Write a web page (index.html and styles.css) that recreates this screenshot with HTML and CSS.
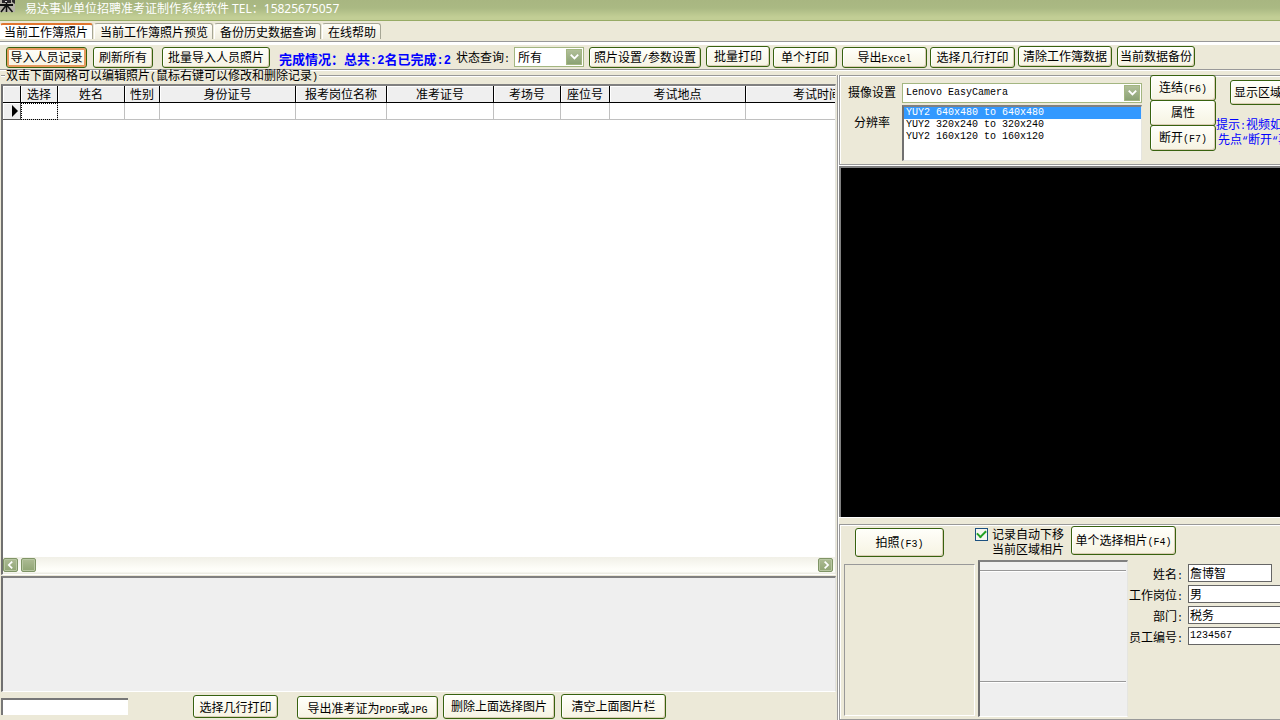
FILE: index.html
```html
<!DOCTYPE html>
<html lang="zh-CN">
<head>
<meta charset="utf-8">
<title>易达事业单位招聘准考证制作系统软件</title>
<link rel="stylesheet" href="styles.css">
</head>
<body>
<header class="titlebar">
  <svg class="app-icon" width="16" height="14" viewBox="0 0 16 14" aria-hidden="true">
    <path d="M0 0h15v12H0z" fill="#b5b2a8"/>
    <path d="M2 0h9v3H2zM12 0h3v4l-3-2z" fill="#2a262a"/>
    <path d="M5 1h2v1H5z" fill="#ddd"/>
    <path d="M0 5h13" stroke="#111" stroke-width="2"/>
    <path d="M6.500 3v9M6 5.500L1 12M7 5.500l5.500 6.500" stroke="#111" stroke-width="1.500" fill="none"/>
  </svg>
  <h1>易达事业单位招聘准考证制作系统软件 TEL<span class="wide-colon">：</span>15825675057</h1>
</header>

<nav class="tabs" role="tablist">
  <button class="tab active" role="tab" aria-selected="true">当前工作簿照片</button>
  <button class="tab" role="tab">当前工作簿照片预览</button>
  <button class="tab" role="tab">备份历史数据查询</button>
  <button class="tab" role="tab">在线帮助</button>
</nav>

<div class="toolbar">
  <button class="btn hot w81">导入人员记录</button>
  <button class="btn w60 gap-m">刷新所有</button>
  <button class="btn w108 gap-l">批量导入人员照片</button>
  <p class="progress gap-l">完成情况：总共<b class="n">:2</b>名已完成<b class="n">:2</b></p>
  <label class="gap-l" for="state">状态查询<span class="n">:</span></label>
  <span class="combo w70 gap-s"><select id="state"><option>所有</option></select><svg width="15" height="15" viewBox="0 0 15 15" aria-hidden="true"><path d="M4 5l4 4 4-4" fill="none" stroke="#fff" stroke-width="2"/></svg></span>
  <button class="btn w112 gap-s">照片设置<span class="n">/</span>参数设置</button>
  <button class="btn w64 gap-s up">批量打印</button>
  <button class="btn w64 gap-xs">单个打印</button>
  <button class="btn w85 gap-s">导出<span class="n">Excel</span></button>
  <button class="btn w85 gap-xs">选择几行打印</button>
  <button class="btn w94 gap-xs up">清除工作簿数据</button>
  <button class="btn w78 gap-s up">当前数据备份</button>
</div>

<main class="main">
  <section class="left">
    <h2 class="caption"><span>双击下面网格可以编辑照片<span class="n">(</span>鼠标右键可以修改和删除记录<span class="n">)</span></span></h2>
    <div class="grid-box">
      <div class="grid-view">
        <table class="grid">
          <colgroup><col class="c18"><col class="c37"><col class="c67"><col class="c35"><col class="c136"><col class="c91"><col class="c107"><col class="c67"><col class="c49"><col class="c136"><col class="c142"></colgroup>
          <thead><tr><th></th><th>选择</th><th>姓名</th><th>性别</th><th>身份证号</th><th>报考岗位名称</th><th>准考证号</th><th>考场号</th><th>座位号</th><th>考试地点</th><th>考试时间</th></tr></thead>
          <tbody><tr><th><svg width="6" height="12" viewBox="0 0 6 12" aria-hidden="true"><path d="M0 0l6 6-6 6z"/></svg></th><td class="focus"></td><td></td><td></td><td></td><td></td><td></td><td></td><td></td><td></td><td></td></tr></tbody>
        </table>
      </div>
      <div class="hscroll">
        <button aria-label="向左滚动"><svg width="14" height="14" viewBox="0 0 14 14"><path d="M9 3L5 7l4 4" fill="none" stroke="#fff" stroke-width="2"/></svg></button>
        <span class="thumb"></span>
        <button class="end" aria-label="向右滚动"><svg width="14" height="14" viewBox="0 0 14 14"><path d="M6 3l4 4-4 4" fill="none" stroke="#fff" stroke-width="2"/></svg></button>
      </div>
    </div>
    <div class="photo-strip"></div>
    <div class="footer">
      <input class="path" type="text" aria-label="行号">
      <button class="btn w85 rows">选择几行打印</button>
      <button class="btn w141 pdf">导出准考证为<span class="n">PDF</span>或<span class="n">JPG</span></button>
      <button class="btn w112 tall gap-s">删除上面选择图片</button>
      <button class="btn w105 tall gap-m">清空上面图片栏</button>
    </div>
  </section>

  <section class="right">
    <div class="group camera">
      <div class="camera-labels"><label for="cam">摄像设置</label><label for="res">分辨率</label></div>
      <div class="camera-fields">
        <span class="combo"><select id="cam" class="mono"><option>Lenovo EasyCamera</option></select><svg width="15" height="15" viewBox="0 0 15 15" aria-hidden="true"><path d="M4 5l4 4 4-4" fill="none" stroke="#fff" stroke-width="2"/></svg></span>
        <select id="res" class="list mono" size="4"><option selected>YUY2 640x480 to 640x480</option><option>YUY2 320x240 to 320x240</option><option>YUY2 160x120 to 160x120</option></select>
      </div>
      <div class="camera-buttons">
        <button class="btn">连结<span class="n">(F6)</span></button>
        <button class="btn">属性</button>
        <button class="btn">断开<span class="n">(F7)</span></button>
      </div>
      <div class="camera-more">
        <button class="btn">显示区域</button>
        <p>提示<span class="n">:</span>视频如</p>
        <p class="second">先点<span class="n">“</span>断开<span class="n">“</span>再</p>
      </div>
    </div>
    <div class="video"></div>
    <div class="group capture">
      <div class="capture-bar">
        <button class="btn shoot">拍照<span class="n">(F3)</span></button>
        <div class="auto"><input id="auto" type="checkbox" checked><label for="auto">记录自动下移</label><span>当前区域相片</span></div>
        <button class="btn pick">单个选择相片<span class="n">(F4)</span></button>
      </div>
      <div class="capture-body">
        <div class="frame"></div>
        <div class="sheet"><div></div></div>
        <form class="person">
          <label for="name">姓名<span class="n">:</span></label><input id="name" class="short" value="詹博智">
          <label for="post">工作岗位<span class="n">:</span></label><input id="post" value="男">
          <label for="dept">部门<span class="n">:</span></label><input id="dept" value="税务">
          <label for="no">员工编号<span class="n">:</span></label><input id="no" class="mono" value="1234567">
        </form>
      </div>
    </div>
  </section>
</main>
</body>
</html>
```
FILE: styles.css
```css
* { box-sizing: border-box; }
body {
  margin: 0;
  display: flex;
  flex-direction: column;
  height: 100vh;
  overflow: hidden;
  background: #ece9d8;
  color: #000;
  font: 12px/14px "Noto Sans CJK SC", sans-serif;
  white-space: nowrap;
}
button, input, select { font: inherit; color: inherit; margin: 0; }
h1, h2, p { margin: 0; font: inherit; }
.n, .mono { font-family: "Liberation Mono", monospace; font-size: 10px; }
.n { line-height: 10px; }

/* title bar */
.titlebar {
  flex: none;
  display: flex;
  height: 21px;
  background: linear-gradient(#a8b681, #aab983 40%, #c2ce95 85%, #c2ce95);
  border-bottom: 1px solid #97ab65;
  color: #fff;
}
.app-icon { flex: none; width: 16px; height: 14px; margin-right: 9px; }
.titlebar h1 { font-family: "Noto Sans", "Noto Sans CJK SC", sans-serif; line-height: 15px; }
.wide-colon { font-family: "Noto Sans CJK TC", sans-serif; }

/* tabs */
.tabs {
  flex: none;
  display: flex;
  align-items: flex-end;
  gap: 1px;
  height: 21px;
  padding-bottom: 2px;
  border-bottom: 1px solid #999;
}
.tab {
  height: 16px;
  padding: 0 4px 0 5px;
  border: 1px solid #a6a695;
  border-bottom: 0;
  border-left-color: #fff;
  border-radius: 3px 3px 0 0;
  background: linear-gradient(#fdfdf6, #f0eddf);
  line-height: 14px;
}
.tab.active { padding: 0 4px 0 3px; border-top: 2px solid #e0762f; background: #fff; line-height: 12px; }

/* push buttons */
.btn {
  flex: none;
  height: 21px;
  padding: 0 0 2px;
  border: 1px solid #38620f;
  border-radius: 3px;
  background: linear-gradient(#fffffa, #f6f3e2);
  box-shadow: inset -1px -1px #dacdb5, inset 1px 1px #fff;
  line-height: 16px;
}
.btn.hot { box-shadow: inset 0 0 0 2px #e79a5e; }
.w60 { width: 60px; } .w64 { width: 64px; } .w70 { width: 70px; }
.w78 { width: 78px; } .w81 { width: 81px; } .w85 { width: 85px; }
.w94 { width: 94px; } .w105 { width: 105px; } .w108 { width: 108px; }
.w112 { width: 112px; } .w141 { width: 141px; }
.gap-xs { margin-left: 3px; } .gap-s { margin-left: 5px; } .gap-m { margin-left: 6px; } .gap-l { margin-left: 9px; }

/* toolbar */
.toolbar {
  flex: none;
  display: flex;
  align-items: flex-start;
  height: 28px;
  padding: 2px 0 0 6px;
  border-top: 3px solid #fff;
  border-bottom: 1px solid #999;
  box-shadow: 0 1px #fff;
}
.toolbar .up { margin-top: -1px; }
.toolbar label { padding-top: 3px; width: 53px; }
.progress { width: 168px; padding-top: 5px; color: #00f; font-size: 13px; font-weight: 700; }
.progress .n { font-size: 12px; }

.combo {
  display: flex;
  height: 20px;
  border: 1px solid #a3b681;
  padding: 1px;
  background: #fff;
}
.combo select {
  flex: 1;
  min-width: 0;
  padding: 0 2px;
  border: 0;
  background: none;
  appearance: none;
}
.combo svg { flex: none; width: 16px; height: 16px; background: linear-gradient(#b1bf99, #8ba275); border: 1px solid #a3b681; }

/* main area */
.main { flex: 1; min-height: 0; display: grid; grid-template-columns: minmax(0, 1fr) 443px; }
.left { display: flex; flex-direction: column; min-height: 0; padding: 0 1px 0 1px; }
.caption { display: flex; align-items: center; height: 10px; margin: 1px 0 3px; line-height: 10px; }
.caption::before, .caption::after { content: ""; height: 2px; background: linear-gradient(#999 50%, #fff 50%); }
.caption::before { width: 4px; }
.caption > span { padding: 1px 1px 0; }
.caption::after { flex: 1; }

.grid-box {
  flex: 1;
  min-height: 0;
  display: flex;
  flex-direction: column;
  border: 2px solid;
  border-color: #808080 #e5e5e0 #fff #707070;
  border-right-width: 1px;
  border-bottom-width: 1px;
  background: #fff;
}
.grid-view { flex: 1; min-height: 0; overflow: hidden; }
.grid { width: 886px; table-layout: fixed; border-collapse: separate; border-spacing: 0; line-height: 14px; }
.grid th, .grid td { height: 17px; padding: 0; font-weight: 400; overflow: hidden; border: 0 solid #c0c0c0; border-width: 0 1px 1px 0; }
.grid th { background: #efefef; border-color: #000; box-shadow: inset 1px 1px #fff; }
.grid tbody th { text-align: right; padding-right: 2px; border-color: #555; }
.grid tbody svg { display: block; margin-left: auto; }
.grid td.focus { outline: 1px dotted #000; outline-offset: -1px; }
.c18 { width: 18px; } .c35 { width: 35px; } .c37 { width: 37px; } .c49 { width: 49px; }
.c67 { width: 67px; } .c91 { width: 91px; } .c107 { width: 107px; } .c136 { width: 136px; } .c142 { width: 143px; }

.hscroll { flex: none; display: flex; gap: 3px; height: 17px; padding: 1px 2px 0 0; background: linear-gradient(#f1f0e7, #fefef9 70%, #fefef9 85%, #e9e9df); }
.hscroll button, .thumb { width: 15px; height: 14px; padding: 0; border: 1px solid #809567; border-radius: 2px; background: linear-gradient(#adbb94, #90a574); box-shadow: inset 0 0 0 1px #b8c7a2; }
.hscroll svg { display: block; width: 13px; height: 12px; }
.hscroll .end { margin-left: auto; }

.photo-strip {
  flex: none;
  height: 116px;
  margin-top: 1px;
  background: #efefef;
  border: 2px solid;
  border-color: #808080 #e0e0e0 #fff #707070;
  border-bottom-width: 1px;
  border-right-width: 1px;
}
.footer { flex: none; display: flex; align-items: flex-start; height: 28px; padding-top: 3px; }
.footer .btn { height: 23px; padding-bottom: 0; }
.footer .tall { height: 25px; margin-top: -1px; padding-bottom: 2px; }
.footer .rows { margin-left: 65px; }
.footer .pdf { margin: 1px 0 0 19px; }
.path { width: 127px; height: 17px; margin-top: 3px; padding: 0 2px; border: 0 solid #777; border-width: 2px 0 0 2px; background: #fff; }

/* right side */
.right { display: flex; flex-direction: column; min-width: 0; min-height: 0; margin-top: 5px; padding-left: 1px; border-left: 1px solid #999; box-shadow: inset 1px 0 #fff; overflow: hidden; }
.group { flex: none; display: flex; margin-right: -2px; border: 1px solid #999; box-shadow: inset 1px 1px #fff, 0 1px #fff; }
.camera { height: 90px; padding-left: 7px; }
.camera-labels { flex: none; display: flex; flex-direction: column; gap: 16px; width: 50px; margin-right: 5px; padding-top: 9px; text-align: center; }
.camera-fields { flex: none; display: flex; flex-direction: column; gap: 2px; width: 240px; padding-top: 7px; }
.list {
  width: 240px;
  height: 56px;
  padding: 0;
  border: 2px solid;
  border-color: #808080 #e5e5e0 #e5e5e0 #707070;
  border-width: 2px 1px 1px 2px;
  border-radius: 0;
  background: #fff;
  outline: 0;
  overflow: hidden;
}
.list option { height: 12px; min-height: 0; padding: 0 2px; }
.list option:checked { background: #39f linear-gradient(#39f, #39f); color: #fff; }
.camera-buttons { flex: none; display: flex; flex-direction: column; width: 66px; margin: -1px 0 0 8px; }
.camera-buttons .btn { height: 26px; margin-bottom: -1px; }
.camera-more { flex: none; padding-top: 4px; color: #00f; line-height: 13px; }
.camera-more .btn { display: block; width: 56px; height: 25px; margin: 0 0 12px 14px; color: #000; }
.camera-more .second { padding-left: 2px; }
.video { flex: 1; min-height: 0; margin-top: 1px; background: #000; border: 0 solid #808080; border-width: 2px 0 0 2px; box-shadow: 0 1px #fff; }
.capture { flex-direction: column; height: 196px; margin-top: 7px; padding-left: 4px; }
.capture-bar { display: flex; align-items: flex-start; height: 35px; padding-top: 1px; }
.shoot { width: 89px; height: 29px; margin: 2px 31px 0 11px; }
.auto { display: grid; grid-template-columns: 13px auto; column-gap: 4px; width: 96px; line-height: 15px; }
.auto span { grid-column: 2; }
.auto input { appearance: none; width: 13px; height: 13px; margin-top: 2px; border: 1px solid #1c5180; background: #f5f5f0; display: grid; place-items: center; }
.auto input:checked::before { content: ""; width: 7px; height: 4px; margin-bottom: 3px; border: solid #21a121; border-width: 0 0 2px 2px; transform: rotate(-45deg); }
.pick { width: 105px; height: 29px; }
.capture-body { display: flex; align-items: flex-start; }
.frame { flex: none; width: 131px; height: 152px; margin: 4px 3px 0 0; border: 1px solid; border-color: #999 #fff #fff #999; }
.sheet { flex: none; width: 150px; height: 157px; padding: 8px 1px 0 0; border: 2px solid; border-width: 2px 1px 1px 2px; border-color: #808080 #e5e5e0 #fff #707070; background: #efefef; }
.sheet div { height: 112px; border: 1px solid #999; border-width: 1px 0; box-shadow: inset 0 1px #fff, 0 1px #fff; }
.person { display: grid; grid-template-columns: 55px 110px; gap: 3px 5px; padding-top: 4px; line-height: 20px; }
.person label { text-align: right; height: 18px; }
.person input { width: 110px; height: 18px; padding: 0 1px; border: 1px solid #666; background: #fff; }
.person .short { width: 84px; }
```
